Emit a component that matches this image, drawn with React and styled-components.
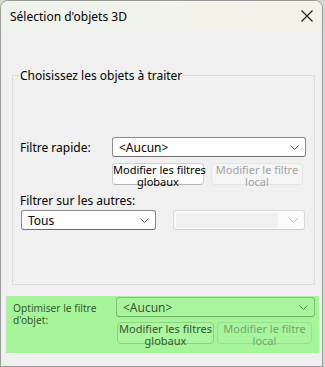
import React from 'react'
import styled, { createGlobalStyle } from 'styled-components'

const Global = createGlobalStyle`
  html, body {
    margin: 0;
    padding: 0;
    background: #d6d6d6;
  }
  body {
    font-family: "Noto Sans", "Open Sans", sans-serif;
    font-size: 12px;
    color: #000;
  }
`

const Window = styled.div`
  width: 321px;
  height: 365px;
  border: 1px solid #9a9a9a;
  border-radius: 8px 8px 0 0;
  background: #f0f0f0;
  overflow: hidden;
  display: flex;
  flex-direction: column;
`

const TitleBar = styled.div`
  height: 30px;
  flex: none;
  display: flex;
  align-items: center;
  justify-content: space-between;
  padding: 0 8px 0 9px;
  background: linear-gradient(90deg, #eef4ec 0%, #f3f3ea 60%, #f5f3e7 100%);
`

const Title = styled.div`
  font-size: 12px;
  padding-top: 1px;
`

const Body = styled.div`
  flex: 1;
  display: flex;
  flex-direction: column;
  padding: 0 4px 0 4px;
`

const Group = styled.fieldset`
  margin: 36px 7px 0 7px;
  padding: 0 8px 0 7px;
  height: 216px;
  border: 1px solid #dcdcdc;
  border-radius: 0;
  display: flex;
  flex-direction: column;
`

const Legend = styled.legend`
  padding: 0 1px;
  margin-left: -1px;
  font-size: 12px;
`

const Row = styled.div`
  display: flex;
  align-items: center;
  margin-top: ${p => p.$top || 0}px;
`

const Label = styled.div`
  width: ${p => p.$w || 92}px;
  flex: none;
  line-height: ${p => (p.$green ? 12 : 15)}px;
  font-size: ${p => (p.$green ? 10.2 : 12)}px;
  color: ${p => (p.$green ? '#35572f' : '#000')};
  align-self: ${p => (p.$top ? 'flex-start' : 'center')};
  padding-top: ${p => (p.$top ? 5 : 0)}px;
`

const Combo = styled.div`
  width: ${p => p.$w}px;
  height: 18px;
  flex: none;
  display: flex;
  align-items: center;
  justify-content: space-between;
  box-sizing: content-box;
  border: 1px solid ${p => (p.$disabled ? '#d9d9d9' : p.$green ? '#7fc172' : '#8c8c8c')};
  border-bottom-color: ${p => (p.$disabled ? '#cfcfcf' : p.$green ? '#6fae63' : '#6e6e6e')};
  border-radius: 3px;
  background: ${p => (p.$disabled ? '#fbfbfb' : p.$green ? '#a9f59d' : '#fff')};
  color: ${p => (p.$green ? '#35572f' : '#000')};
  padding: 0 0 0 6px;
`

const DisabledField = styled.div`
  flex: 1;
  height: 15px;
  margin-left: -4px;
  margin-right: 6px;
  background: #f0f0f0;
`

const Chevron = ({ color }) => (
  <svg width="20" height="18" viewBox="0 0 20 18">
    <path d="M5.5 7.5 L9.5 11.5 L13.5 7.5" fill="none" stroke={color} strokeWidth="1" />
  </svg>
)

const Buttons = styled.div`
  display: flex;
  gap: ${p => p.$gap || 7}px;
  margin-top: ${p => p.$top || 6}px;
  margin-left: ${p => p.$left || 0}px;
`

const Button = styled.div`
  width: ${p => p.$w || 90}px;
  height: 20px;
  box-sizing: content-box;
  border: 1px solid;
  border-radius: 4px;
  text-align: center;
  line-height: 12px;
  font-size: 11px;
  white-space: nowrap;
  overflow: visible;
  ${p =>
    p.$green
      ? `
    border-color: ${p.$disabled ? '#9edd91' : '#8fd082'};
    background: ${p.$disabled ? '#a9f59d' : '#abf69f'};
    color: ${p.$disabled ? '#6fa968' : '#35572f'};
  `
      : `
    border-color: ${p.$disabled ? '#e5e5e5' : '#d0d0d0'};
    border-bottom-color: ${p.$disabled ? '#e5e5e5' : '#b5b5b5'};
    background: ${p.$disabled ? '#f5f5f5' : '#fdfdfd'};
    color: ${p.$disabled ? '#a2a2a2' : '#000'};
  `}
`

const GreenPanel = styled.div`
  margin: 11px 0 0 1px;
  width: 313px;
  height: 57px;
  box-sizing: border-box;
  background: #a7f59b;
  padding: 1px 4px 0 7px;
`

const GreenRow = styled.div`
  display: flex;
`

const GreenRight = styled.div`
  display: flex;
  flex-direction: column;
`

const App = () => {
  return (
    <>
      <Global />
      <Window>
        <TitleBar>
          <Title>Sélection d'objets 3D</Title>
          <svg width="14" height="14" viewBox="0 0 14 14">
            <path d="M1.5 1.5 L12.5 12.5 M12.5 1.5 L1.5 12.5" stroke="#1a1a1a" strokeWidth="1.1" />
          </svg>
        </TitleBar>
        <Body>
          <Group>
            <Legend>Choisissez les objets à traiter</Legend>
            <Row $top={53}>
              <Label>Filtre rapide:</Label>
              <Combo $w={186}>
                <span>&lt;Aucun&gt;</span>
                <Chevron color="#555" />
              </Combo>
            </Row>
            <Buttons $left={92}>
              <Button>Modifier les filtres<br />globaux</Button>
              <Button $disabled>Modifier le filtre<br />local</Button>
            </Buttons>
            <Row $top={8}>
              <Label $w={200}>Filtrer sur les autres:</Label>
            </Row>
            <Row $top={2}>
              <Combo $w={127} style={{ marginLeft: 1 }}>
                <span>Tous</span>
                <Chevron color="#555" />
              </Combo>
              <Combo $w={124} $disabled style={{ marginLeft: 17 }}>
                <DisabledField />
                <Chevron color="#b8b8b8" />
              </Combo>
            </Row>
          </Group>
          <GreenPanel>
            <GreenRow>
              <Label $w={103} $green $top>
                Optimiser le filtre d'objet:
              </Label>
              <GreenRight>
                <Combo $w={191} $green>
                  <span>&lt;Aucun&gt;</span>
                  <Chevron color="#5c8a55" />
                </Combo>
                <Buttons $gap={3} $top={5} $left={1}>
                  <Button $green $w={95}>Modifier les filtres<br />globaux</Button>
                  <Button $green $disabled $w={93}>Modifier le filtre<br />local</Button>
                </Buttons>
              </GreenRight>
            </GreenRow>
          </GreenPanel>
        </Body>
      </Window>
    </>
  )
}

export default App
